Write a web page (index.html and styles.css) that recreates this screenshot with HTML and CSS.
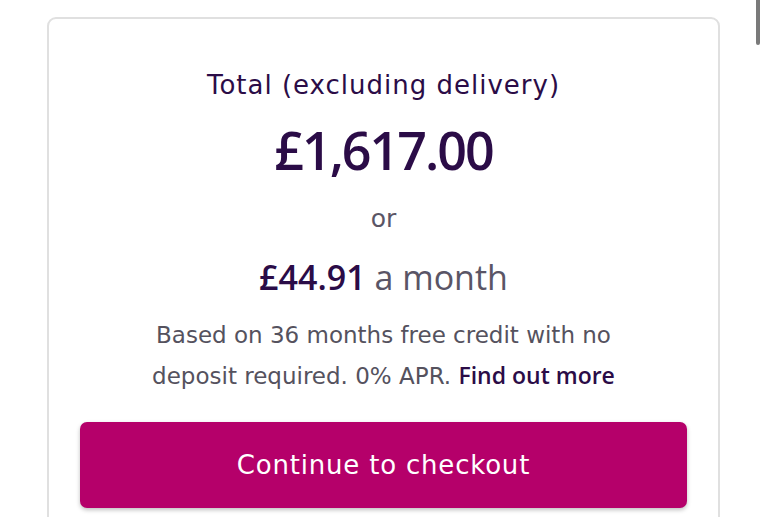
FILE: index.html
```html
<!DOCTYPE html>
<html lang="en">
<head>
  <meta charset="UTF-8">
  <meta name="viewport" content="width=device-width, initial-scale=1.0">
  <title>Basket total</title>
  <link rel="stylesheet" href="styles.css">
</head>
<body>
  <div class="scrollbar"></div>
  <div class="summary">
    <div class="summary-label">Total (excluding delivery)</div>
    <div class="summary-total">£1,617.00</div>
    <div class="summary-or">or</div>
    <div class="summary-monthly"><strong>£44.91</strong> a month</div>
    <p class="summary-credit">
      Based on 36 months free credit with no<br>
      deposit required. 0% APR. <a href="#">Find out more</a>
    </p>
    <button class="checkout">Continue to checkout</button>
  </div>
</body>
</html>
```

FILE: styles.css
```css
body {
  margin: 0;
  padding: 17px 0 0 47px;
  font-family: "DejaVu Sans", "Open Sans", sans-serif;
  background-color: #fff;
  overflow: hidden;
}
.scrollbar {
  position: fixed;
  top: 0;
  right: 8px;
  width: 4px;
  height: 45px;
  border-radius: 0 0 3px 3px;
  background-color: #7a7a7a;
}
.summary {
  width: 673px;
  height: 520px;
  box-sizing: border-box;
  border: 2px solid #e0e0e0;
  border-radius: 9px;
  padding: 46px 31px 0;
  text-align: center;
  color: #2b0c47;
}
.summary-label {
  font-size: 26px;
  line-height: 40px;
  letter-spacing: 1px;
}
.summary-total {
  font-family: "Open Sans", sans-serif;
  font-size: 52px;
  font-weight: 600;
  line-height: 62px;
  letter-spacing: -2px;
  margin-top: 14px;
}
.summary-or {
  font-size: 25px;
  line-height: 36px;
  margin-top: 20px;
  color: #5a5566;
}
.summary-monthly {
  font-family: "Open Sans", sans-serif;
  font-size: 34px;
  line-height: 44px;
  margin-top: 18px;
  color: #5a5566;
}
.summary-monthly strong {
  color: #2b0c47;
  font-weight: 600;
}
.summary-credit {
  font-size: 23px;
  line-height: 40px;
  margin: 16px 0 0;
  color: #55525e;
}
.summary-credit a {
  font-family: "Open Sans", sans-serif;
  color: #2b0c47;
  font-weight: 600;
  text-decoration: none;
}
.checkout {
  display: block;
  width: 100%;
  height: 86px;
  margin-top: 26px;
  border: 0;
  border-radius: 7px;
  background-color: #b5006a;
  color: #fff;
  font-family: inherit;
  font-size: 26px;
  letter-spacing: 0.8px;
  box-shadow: 0 2px 4px rgba(0, 0, 0, 0.25);
  cursor: pointer;
}
```
